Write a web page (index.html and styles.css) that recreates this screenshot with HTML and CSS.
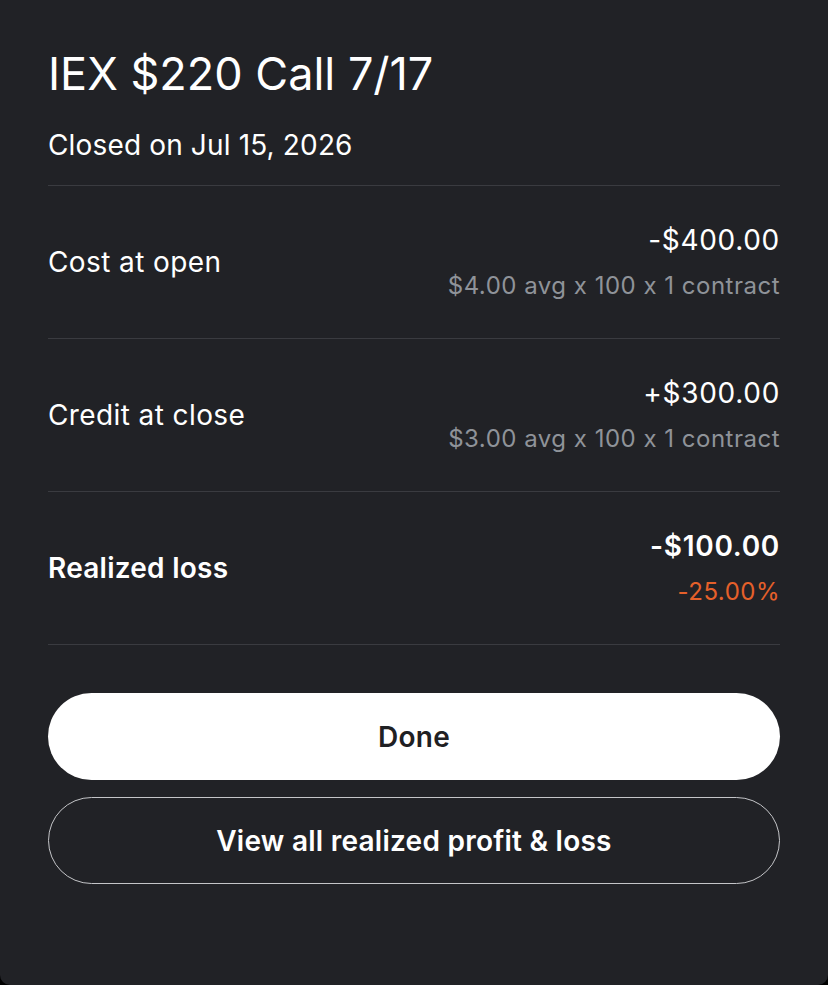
FILE: index.html
```html
<!DOCTYPE html>
<html lang="en">
  <head>
    <meta charset="UTF-8" />
    <meta name="viewport" content="width=device-width, initial-scale=1.0" />
    <title>Position closed</title>
    <link rel="stylesheet" href="styles.css">
  </head>
  <body>
    <div class="sheet">
      <div class="head">
        <div class="title">IEX $220 Call 7/17</div>
        <div class="sub">Closed on Jul 15, 2026</div>
      </div>
      <div class="row">
        <div class="label">Cost at open</div>
        <div class="vals">
          <div class="val">-$400.00</div>
          <div class="note">$4.00 avg x 100 x 1 contract</div>
        </div>
      </div>
      <div class="row">
        <div class="label">Credit at close</div>
        <div class="vals">
          <div class="val">+$300.00</div>
          <div class="note">$3.00 avg x 100 x 1 contract</div>
        </div>
      </div>
      <div class="row total">
        <div class="label">Realized loss</div>
        <div class="vals">
          <div class="val">-$100.00</div>
          <div class="note loss">-25.00%</div>
        </div>
      </div>
      <div class="actions">
        <button class="btn primary">Done</button>
        <button class="btn outline">View all realized profit &amp; loss</button>
      </div>
    </div>
  </body>
</html>
```

FILE: styles.css
```css
html,
body {
  margin: 0;
  background: #000;
}
body {
  font-family: Inter, "Noto Sans", sans-serif;
  color: #fff;
}
.sheet {
  background: #212226;
  height: 985px;
  box-sizing: border-box;
  padding: 47px 48px 0;
  border-radius: 0 0 10px 10px;
}
.head {
  border-bottom: 1px solid #3a3b40;
  padding-bottom: 22px;
}
.title {
  font-size: 45px;
  line-height: 54px;
  letter-spacing: 0;
}
.sub {
  margin-top: 26px;
  font-size: 28px;
  line-height: 36px;
  letter-spacing: 0.15px;
}
.row {
  display: flex;
  justify-content: space-between;
  align-items: center;
  height: 152px;
  border-bottom: 1px solid #3a3b40;
}
.label {
  font-size: 28px;
  letter-spacing: 0.4px;
}
.vals {
  text-align: right;
}
.val {
  font-size: 28px;
  line-height: 36px;
  letter-spacing: 0.7px;
}
.note {
  margin-top: 12px;
  font-size: 24px;
  line-height: 32px;
  color: #8f9399;
  letter-spacing: 0.5px;
}
.total .label,
.total .val {
  font-weight: 600;
}
.total .label {
  letter-spacing: 0.25px;
}
.note.loss {
  color: #e5602a;
}
.actions {
  display: flex;
  flex-direction: column;
  gap: 17px;
  margin-top: 48px;
}
.btn {
  height: 87px;
  border-radius: 44px;
  font-family: inherit;
  font-size: 28px;
  font-weight: 600;
  letter-spacing: 0.25px;
  cursor: pointer;
}
.primary {
  background: #fff;
  color: #1f2023;
  border: none;
}
.outline {
  background: transparent;
  color: #fff;
  border: 1px solid #c4c5c8;
}
```
